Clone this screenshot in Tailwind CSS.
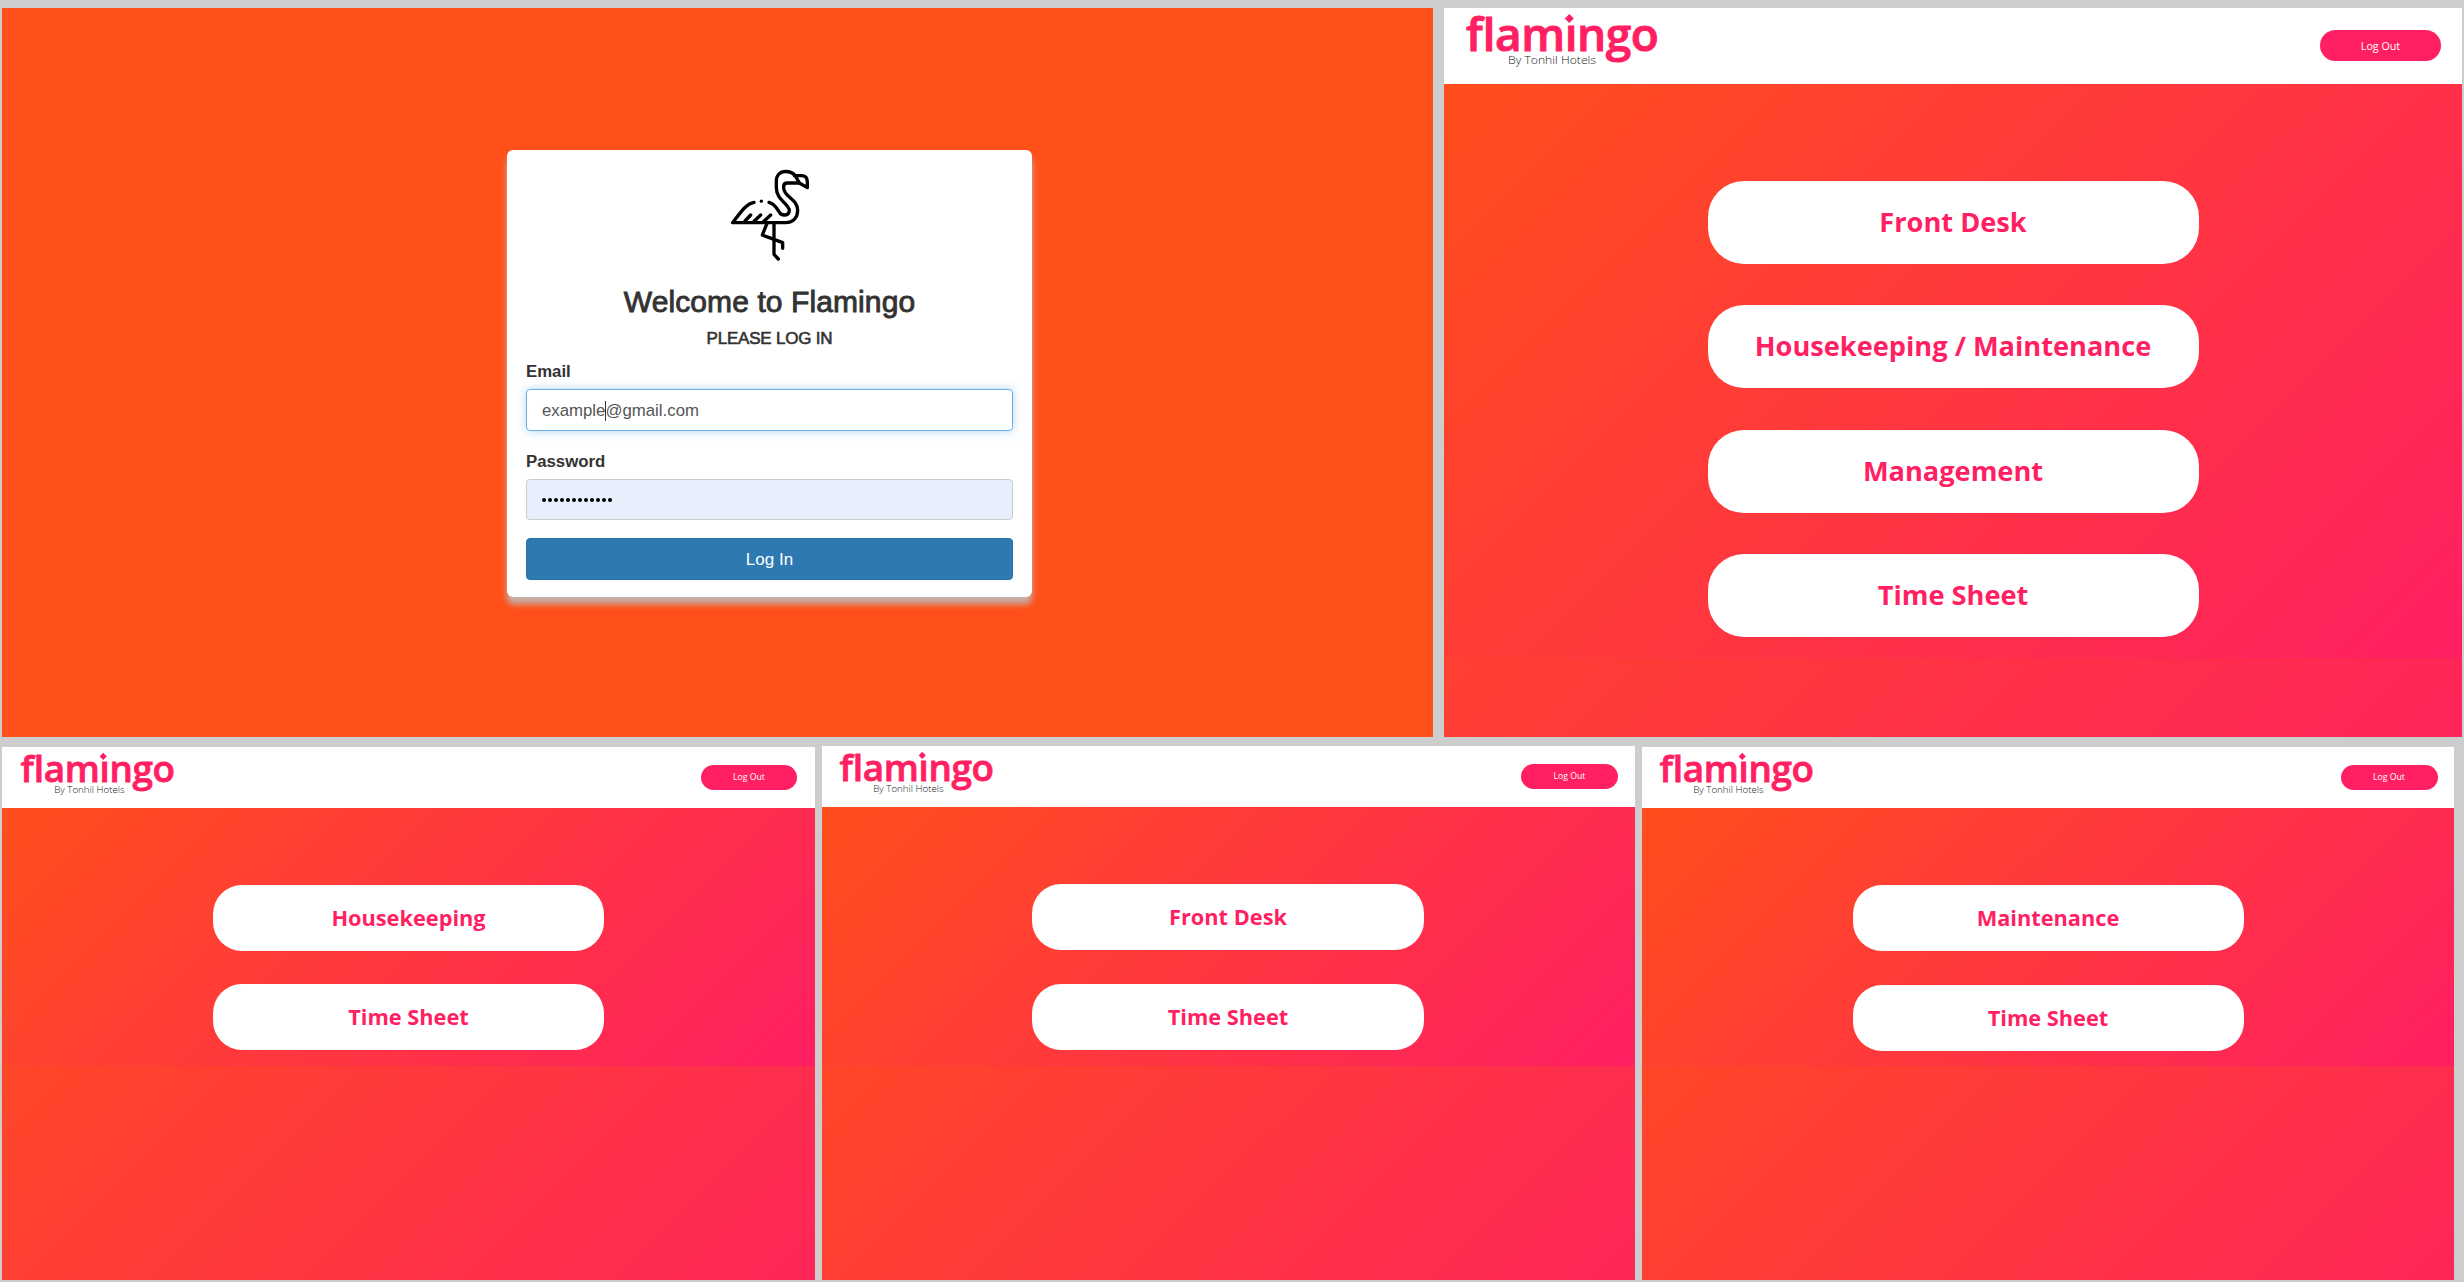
<!DOCTYPE html>
<html lang="en">
<head>
<meta charset="utf-8">
<title>Flamingo</title>
<script src="https://cdn.jsdelivr.net/npm/@tailwindcss/browser@4"></script>
</head>
<body class="w-[2464px] h-[1282px] overflow-hidden bg-[#cdcdcd] font-['Open_Sans',sans-serif]">
<svg class="hidden" aria-hidden="true">
  <symbol id="logo" viewBox="0 0 220 75">
    <text x="21.500" y="43" font-family="Open Sans" font-weight="600" font-size="46" fill="#ff1f62" stroke="#ff1f62" stroke-width="1" textLength="193" lengthAdjust="spacing">flamingo</text>
    <rect x="118" y="4" width="14" height="12" fill="#fff"/>
    <path d="M125.300 6L129.800 10.500L125.300 15L120.800 10.500Z" fill="#ff1f62"/>
    <text x="64" y="56" font-family="Open Sans" font-weight="300" font-size="11.500" fill="#222" textLength="88" lengthAdjust="spacingAndGlyphs">By Tonhil Hotels</text>
  </symbol>
</svg>
<div class="flex flex-col">
  <div class="flex gap-[11px] pl-[2px] pt-[8px]">
    <section class="w-[1431px] h-[729px] bg-[#ff5019] pt-[142px] pl-[505px]">
      <form class="w-[525px] h-[447px] rounded-[6px] bg-white shadow-[0_7px_6px_rgba(190,190,190,0.9)] px-[19px] pt-[17px] flex flex-col font-['Liberation_Sans',sans-serif] text-[#333]">
        <svg class="w-[80px] h-[95px] ml-[204px] shrink-0" viewBox="90 50 240 285" fill="none" stroke="#000" stroke-width="10" stroke-linecap="round" stroke-linejoin="round">
          <path d="M162 156C143 159 130 174 98 217H257C280 217 293 201 293 180C293 145 251 141 251 112V108Q251 98 262 98H298"/>
          <path d="M287 77C277 65 267 63.500 257 63.500C240 63.500 229 75 229 92V112C229 150 267 160 268 180C267 198 244 198 237 184C229 170 221 160 207 156"/>
          <path d="M283 76H304Q322 76 322 94V112L298 98L287 78"/>
          <path d="M135 212L152 194M163 212L182 194M190 214L212 194M222 217V312L235 326M201 219L187 254L248 277V294"/>
          <circle cx="184" cy="152.500" r="5" fill="#000" stroke="none"/>
        </svg>
        <h1 class="mt-[23px] h-[34px] leading-[34px] text-[30px] tracking-[0.1px] text-center whitespace-nowrap [-webkit-text-stroke:0.9px_#333]">Welcome to Flamingo</h1>
        <h2 class="mt-[10px] h-[20px] leading-[20px] text-[17px] text-center tracking-[-0.2px] [-webkit-text-stroke:0.6px_#333]">PLEASE LOG IN</h2>
        <label class="mt-[13px] h-[20px] leading-[20px] text-[16.800px] font-bold">Email</label>
        <div class="mt-[7px] h-[42px] shrink-0 flex items-center rounded-[4px] border-[1.500px] border-[#66afe9] shadow-[0_0_10px_rgba(102,175,233,0.5)] px-[15px] pt-px text-[16.800px] text-[#555]"><span>example</span><span class="w-px h-[20px] -mr-px bg-[#333]"></span><span>@gmail.com</span></div>
        <label class="mt-[21px] h-[20px] leading-[20px] text-[16.800px] font-bold">Password</label>
        <div class="mt-[7px] h-[41px] shrink-0 flex items-center gap-[2px] rounded-[4px] border border-[#ccc] bg-[#e8effc] px-[15px]">
          <i class="size-[4px] rounded-full bg-black"></i><i class="size-[4px] rounded-full bg-black"></i><i class="size-[4px] rounded-full bg-black"></i><i class="size-[4px] rounded-full bg-black"></i><i class="size-[4px] rounded-full bg-black"></i><i class="size-[4px] rounded-full bg-black"></i><i class="size-[4px] rounded-full bg-black"></i><i class="size-[4px] rounded-full bg-black"></i><i class="size-[4px] rounded-full bg-black"></i><i class="size-[4px] rounded-full bg-black"></i><i class="size-[4px] rounded-full bg-black"></i><i class="size-[4px] rounded-full bg-black"></i>
        </div>
        <button type="button" class="mt-[18px] h-[42px] pt-px shrink-0 rounded-[4px] border border-[#2a73a9] bg-[#2d79b1] text-white text-[17px]">Log In</button>
      </form>
    </section>

    <section class="w-[1018px] h-[729px] overflow-hidden flex flex-col">
      <header class="h-[75.500px] shrink-0 bg-white flex justify-between pr-[21px]">
        <svg class="w-[220px] h-[75px]"><use href="#logo"/></svg>
        <button class="mt-[22px] w-[121px] h-[31px] pt-px rounded-[16px] bg-[#ff1f62] text-white text-[10.700px]">Log Out</button>
      </header>
      <div class="h-[843px] shrink-0 bg-[linear-gradient(135deg,#ff5019_-3%,#ff1f62)]">
        <div class="h-[574px] bg-[linear-gradient(135deg,#ff5019_-4%,#ff1f62)] pt-[97px] flex flex-col items-center gap-[41.500px] text-[27.200px] font-bold text-[#ff1f62]">
          <button class="w-[491px] h-[83px] rounded-[36px] bg-white">Front Desk</button>
          <button class="w-[491px] h-[83px] rounded-[36px] bg-white">Housekeeping / Maintenance</button>
          <button class="w-[491px] h-[83px] rounded-[36px] bg-white">Management</button>
          <button class="w-[491px] h-[83px] rounded-[36px] bg-white">Time Sheet</button>
        </div>
      </div>
    </section>
  </div>

  <div class="flex gap-[7px] pl-[2px] pt-[10px]">
    <section class="w-[813px] h-[533px] overflow-hidden flex flex-col">
      <header class="h-[61px] shrink-0 bg-white flex justify-between pl-px pr-[18px]">
        <svg class="w-[176px] h-[62px]"><use href="#logo"/></svg>
        <button class="mt-[18px] w-[96px] h-[25px] pt-px rounded-[13px] bg-[#ff1f62] text-white text-[8.700px]">Log Out</button>
      </header>
      <div class="h-[674px] shrink-0 bg-[linear-gradient(135deg,#ff5019_-3%,#ff1f62)]">
        <div class="h-[258px] bg-[linear-gradient(135deg,#ff5019_-4%,#ff1f62)] pt-[76.500px] flex flex-col items-center gap-[33.300px] text-[21.750px] font-bold text-[#ff1f62]">
          <button class="w-[391px] h-[66.300px] pt-px rounded-[29px] bg-white">Housekeeping</button>
          <button class="w-[391px] h-[66.300px] pt-px rounded-[29px] bg-white">Time Sheet</button>
        </div>
      </div>
    </section>
    <section class="-mt-px w-[813px] h-[534px] overflow-hidden flex flex-col">
      <header class="h-[61px] shrink-0 bg-white flex justify-between pr-[17px]">
        <svg class="w-[176px] h-[62px]"><use href="#logo"/></svg>
        <button class="mt-[18px] w-[97px] h-[25px] pt-px rounded-[13px] bg-[#ff1f62] text-white text-[8.700px]">Log Out</button>
      </header>
      <div class="h-[674px] shrink-0 bg-[linear-gradient(135deg,#ff5019_-3%,#ff1f62)]">
        <div class="h-[259px] bg-[linear-gradient(135deg,#ff5019_-4%,#ff1f62)] pt-[77px] pr-px flex flex-col items-center gap-[33.300px] text-[21.750px] font-bold text-[#ff1f62]">
          <button class="w-[392px] h-[66.300px] pt-px rounded-[29px] bg-white">Front Desk</button>
          <button class="w-[392px] h-[66.300px] pt-px rounded-[29px] bg-white">Time Sheet</button>
        </div>
      </div>
    </section>
    <section class="w-[812px] h-[533px] overflow-hidden flex flex-col">
      <header class="h-[61px] shrink-0 bg-white flex justify-between pr-[16.500px]">
        <svg class="w-[176px] h-[62px]"><use href="#logo"/></svg>
        <button class="mt-[18px] w-[97px] h-[25px] pt-px rounded-[13px] bg-[#ff1f62] text-white text-[8.700px]">Log Out</button>
      </header>
      <div class="h-[674px] shrink-0 bg-[linear-gradient(135deg,#ff5019_-3%,#ff1f62)]">
        <div class="h-[258px] bg-[linear-gradient(135deg,#ff5019_-4%,#ff1f62)] pt-[77px] flex flex-col items-center gap-[33.300px] text-[21.750px] font-bold text-[#ff1f62]">
          <button class="w-[391px] h-[66.300px] pt-px rounded-[29px] bg-white">Maintenance</button>
          <button class="w-[391px] h-[66.300px] pt-px rounded-[29px] bg-white">Time Sheet</button>
        </div>
      </div>
    </section>
  </div>
</div>
</body>
</html>
